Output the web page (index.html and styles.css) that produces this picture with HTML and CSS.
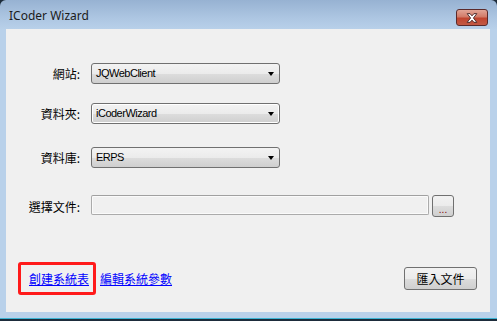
FILE: index.html
```html
<!DOCTYPE html>
<html lang="zh-Hant">

<head>
    <meta charset="UTF-8">
    <meta name="viewport" content="width=device-width, initial-scale=1.0">
    <title>ICoder Wizard</title>
    <link rel="stylesheet" href="styles.css">
</head>

<body>
    <div class="window">
        <div class="titlebar">
            <span class="title">ICoder Wizard</span>
            <button class="close" type="button" aria-label="關閉">
                <svg width="31" height="16" viewBox="0 0 31 16">
                    <path d="M10.5 3.5h3l2 2.3 2-2.3h3l-3.5 4.5 3.5 4.5h-3l-2-2.3-2 2.3h-3l3.5-4.5z"
                        fill="#ffffff" stroke="#4a2a2a" stroke-width="1" stroke-linejoin="round" />
                </svg>
            </button>
        </div>

        <div class="client">
            <div class="row row-site">
                <label>網站:</label>
                <div class="combo">JQWebClient<span class="arrow"></span></div>
            </div>

            <div class="row row-folder">
                <label>資料夾:</label>
                <div class="combo combo-focus">iCoderWizard<span class="arrow"></span></div>
            </div>

            <div class="row row-db">
                <label>資料庫:</label>
                <div class="combo">ERPS<span class="arrow"></span></div>
            </div>

            <div class="row row-file">
                <label>選擇文件:</label>
                <input class="path" type="text" readonly>
                <button class="browse" type="button">...</button>
            </div>

            <!-- 底部連結與按鈕 -->
            <div class="footer">
                <span class="highlight"><a href="#">創建系統表</a></span>
                <a href="#" class="link-params">編輯系統參數</a>
                <button class="import" type="button">匯入文件</button>
            </div>
        </div>
    </div>
    <div class="taskline"></div>
</body>

</html>
```

FILE: styles.css
```css
html, body {
    margin: 0;
    padding: 0;
}

body {
    width: 497px;
    height: 321px;
    overflow: hidden;
    background: #1d2c3b;
    font-family: "Noto Sans CJK TC", "Noto Sans", sans-serif;
    font-size: 12px;
}

.window {
    height: 318px;
    display: flex;
    flex-direction: column;
    background: linear-gradient(to bottom, #97b2d2 0, #adc6e2 18px, #b9d1ea 30px, #b9d1ea 100%);
    border-radius: 6px 6px 0 0;
}

.titlebar {
    height: 29px;
    display: flex;
    align-items: flex-start;
    justify-content: space-between;
}

.title {
    margin: 7px 0 0 9px;
    font-family: "Noto Sans", sans-serif;
    font-size: 12px;
    color: #1b1b1b;
}

.close {
    margin: 9px 9px 0 0;
    width: 32px;
    height: 17px;
    padding: 0;
    border: 1px solid #5b2a2a;
    border-radius: 3px;
    background: linear-gradient(to bottom, #e2a596 0, #d27b68 45%, #c0452f 55%, #c35a45 100%);
    display: flex;
    align-items: center;
    justify-content: center;
}

.close svg {
    display: block;
}

.client {
    flex: 1;
    margin: 0 7px 6px 6px;
    padding-top: 34px;
    background: #f0f0f0;
    display: flex;
    flex-direction: column;
}

.row {
    display: flex;
    align-items: center;
}

.row label {
    width: 74px;
    text-align: right;
    color: #000;
}

.row-folder {
    margin-top: 19px;
}

.row-db {
    margin-top: 23px;
}

.row-file {
    margin-top: 27px;
}

.combo {
    position: relative;
    margin-left: 11px;
    width: 189px;
    height: 21px;
    box-sizing: border-box;
    padding: 3px 0 0 4px;
    border: 1px solid #707070;
    border-radius: 3px;
    background: linear-gradient(to bottom, #f3f3f3 0, #ebebeb 50%, #dddddd 51%, #cfcfcf 100%);
    font-family: "Liberation Sans", Arial, sans-serif;
    font-size: 11px;
    letter-spacing: -0.5px;
    color: #000;
}

.combo-focus {
    box-shadow: inset 0 0 0 1px #ffffff;
}

.arrow {
    position: absolute;
    right: 5px;
    top: 8px;
    width: 0;
    height: 0;
    border-left: 3.5px solid transparent;
    border-right: 3.5px solid transparent;
    border-top: 4px solid #000;
}

.path {
    margin: 0 0 0 11px;
    width: 338px;
    height: 20px;
    box-sizing: border-box;
    border: 1px solid #ababab;
    border-top-color: #a0a0a0;
    box-shadow: inset 0 0 0 1px #fafafa;
    border-radius: 2px;
    background: #f0f0f0;
    align-self: flex-start;
}

.browse {
    margin-left: 3px;
    width: 22px;
    height: 22px;
    padding: 6px 0 0 0;
    box-sizing: border-box;
    border: 1px solid #707070;
    border-radius: 3px;
    background: linear-gradient(to bottom, #f2f2f2 0, #ebebeb 50%, #dddddd 51%, #cfcfcf 100%);
    font-family: "Liberation Sans", Arial, sans-serif;
    font-size: 10px;
    color: #800000;
}

.footer {
    margin-top: 45px;
    padding: 0 13px 0 12px;
    display: flex;
    align-items: center;
}

.highlight {
    width: 78px;
    height: 33px;
    box-sizing: border-box;
    border: 3px solid #ff1a1a;
    border-radius: 3px;
    padding-left: 8px;
    display: flex;
    align-items: center;
}

a {
    color: #0000ff;
    text-decoration: underline;
    font-size: 12px;
}

.link-params {
    margin-left: 4px;
}

.import {
    margin-left: auto;
    width: 73px;
    height: 23px;
    padding: 0;
    border: 1px solid #707070;
    border-radius: 3px;
    background: linear-gradient(to bottom, #f2f2f2 0, #ebebeb 50%, #dddddd 51%, #cfcfcf 100%);
    font-family: "Noto Sans CJK TC", sans-serif;
    font-size: 12px;
    color: #000;
}

.taskline {
    height: 1px;
    background: #3cb4d4;
}
```
